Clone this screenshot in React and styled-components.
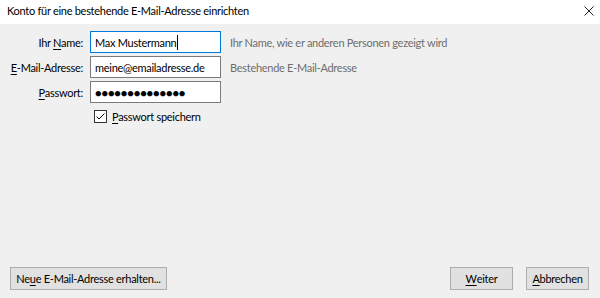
import React from 'react';
import styled, { createGlobalStyle } from 'styled-components';

const GlobalStyle = createGlobalStyle`
	html, body {
		margin: 0;
		padding: 0;
		background: #f0f0f0;
	}
	body {
		font-family: Lato, 'Liberation Sans', sans-serif;
		font-size: 11px;
		letter-spacing: -0.28px;
		color: #000;
	}
	u {
		text-decoration-thickness: 1px;
		text-underline-offset: 2px;
	}
`;

export default function App() {
	return (
		<>
			<GlobalStyle />
			<Dialog>
				<TitleBar>
					<Title>Konto für eine bestehende E-Mail-Adresse einrichten</Title>
					<CloseButton aria-label='Schließen'>
						<svg width='10' height='10' viewBox='0 0 10 10'>
							<path d='M0.5 0.5 L9.5 9.5 M9.5 0.5 L0.5 9.5' stroke='#222' strokeWidth='1' />
						</svg>
					</CloseButton>
				</TitleBar>
				<Body>
					<Form>
						<Label>
							Ihr <u>N</u>ame:
						</Label>
						<Field $focused>
							Max Mustermann
							<Caret />
						</Field>
						<Hint>Ihr Name, wie er anderen Personen gezeigt wird</Hint>

						<Label>
							<u>E</u>-Mail-Adresse:
						</Label>
						<Field>meine@emailadresse.de</Field>
						<Hint>Bestehende E-Mail-Adresse</Hint>

						<Label>
							<u>P</u>asswort:
						</Label>
						<Field $password>●●●●●●●●●●●●●●</Field>
						<span />

						<span />
						<CheckRow>
							<CheckBox>
								<svg width='11' height='11' viewBox='0 0 11 11'>
									<path d='M1.5 5.5 L4 8 L9.5 2.5' fill='none' stroke='#000' strokeWidth='1' />
								</svg>
							</CheckBox>
							<span>
								<u>P</u>asswort speichern
							</span>
						</CheckRow>
					</Form>
				</Body>
				<Footer>
					<Button $width={157}>
						Ne<u>u</u>e E-Mail-Adresse erhalten...
					</Button>
					<ButtonGroup>
						<Button $width={63}>
							<u>W</u>eiter
						</Button>
						<Button $width={63}>
							<u>A</u>bbrechen
						</Button>
					</ButtonGroup>
				</Footer>
			</Dialog>
		</>
	);
}

const Dialog = styled.div`
	width: 600px;
	height: 298px;
	display: flex;
	flex-direction: column;
	background: #f0f0f0;
	overflow: hidden;
`;
const TitleBar = styled.div`
	height: 22px;
	flex-shrink: 0;
	background: #fff;
	display: flex;
	align-items: center;
	justify-content: space-between;
	padding: 0 6px 2px 7px;
`;
const Title = styled.div`
	line-height: 16px;
	font-size: 11px;
`;
const CloseButton = styled.div`
	width: 10px;
	height: 10px;
	display: flex;
	margin-top: -1px;
`;
const Body = styled.div`
	flex: 1;
	padding: 7px 0 0 7px;
`;
const Form = styled.div`
	display: grid;
	grid-template-columns: 76px 131px auto;
	column-gap: 7px;
	row-gap: 3px;
	align-items: center;
	& > :nth-child(3n) {
		margin-left: 2px;
	}
`;
const Label = styled.div`
	text-align: right;
	white-space: nowrap;
`;
const Field = styled.div`
	box-sizing: border-box;
	height: 22px;
	background: #fff;
	border: 1px solid ${p => (p.$focused ? '#0078d7' : '#7a7a7a')};
	padding: 0 4px;
	display: flex;
	align-items: center;
	white-space: nowrap;
	overflow: hidden;
	font-size: 11px;
	letter-spacing: ${p => (p.$password ? '-0.15px' : '-0.28px')};
`;
const Caret = styled.span`
	display: inline-block;
	width: 1px;
	height: 15px;
	background: #000;
	margin-left: 1px;
`;
const Hint = styled.div`
	color: #6d6d6d;
	white-space: nowrap;
`;
const CheckRow = styled.div`
	display: flex;
	align-items: center;
	gap: 5px;
	height: 20px;
	margin-left: 4px;
	white-space: nowrap;
`;
const CheckBox = styled.div`
	box-sizing: border-box;
	width: 13px;
	height: 13px;
	border: 1px solid #333;
	background: #fff;
	display: flex;
	align-items: center;
	justify-content: center;
`;
const Footer = styled.div`
	display: flex;
	justify-content: space-between;
	padding: 0 11px 8px 10px;
`;
const ButtonGroup = styled.div`
	display: flex;
	gap: 13px;
`;
const Button = styled.div`
	box-sizing: border-box;
	width: ${p => p.$width}px;
	height: 23px;
	background: #e1e1e1;
	border: 1px solid #adadad;
	display: flex;
	align-items: center;
	justify-content: center;
	white-space: nowrap;
`;
